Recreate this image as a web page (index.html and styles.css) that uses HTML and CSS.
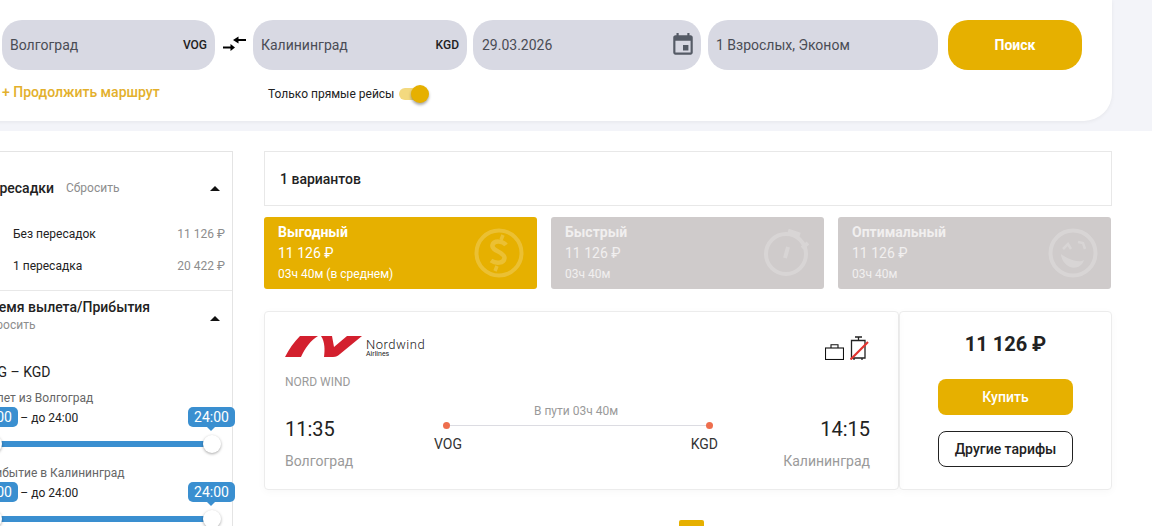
FILE: index.html
```html
<!doctype html>
<html lang="ru">
  <head>
    <meta charset="UTF-8" />
    <meta name="viewport" content="width=device-width, initial-scale=1.0" />
    <title>Поиск рейсов</title>
    <link rel="stylesheet" href="styles.css">
  </head>
  <body>
    <div class="page">
      <div class="top-band">
        <header class="search-panel">
          <div class="search-row">
            <div class="field field-from"><span>Волгоград</span><b class="iata">VOG</b></div>
            <svg class="swap" width="24" height="18" viewBox="0 0 24 18">
              <path d="M24 4H14" fill="none" stroke="#000" stroke-width="2"/>
              <path d="M11 4l5.500-3.500v7z" fill="#000"/>
              <path d="M1 11.500h9" fill="none" stroke="#000" stroke-width="2"/>
              <path d="M13 11.500 8.500 8v7z" fill="#000"/>
            </svg>
            <div class="field field-to"><span>Калининград</span><b class="iata">KGD</b></div>
            <div class="field field-date">
              <span>29.03.2026</span>
              <svg width="26" height="26" viewBox="0 0 24 24"><path fill="#555b66" d="M17 12h-5v5h5v-5zM16 1v2H8V1H6v2H5c-1.110 0-1.990.9-1.990 2L3 19c0 1.100.89 2 2 2h14c1.100 0 2-.9 2-2V5c0-1.100-.9-2-2-2h-1V1h-2zm3 18H5V8h14v11z"/></svg>
            </div>
            <div class="field field-pax"><span>1 Взрослых, Эконом</span></div>
            <button class="search-btn">Поиск</button>
          </div>
          <div class="options-row">
            <a class="continue-link">+ Продолжить маршрут</a>
            <div class="direct-only">
              <span>Только прямые рейсы</span>
              <i class="toggle"><i class="toggle-knob"></i></i>
            </div>
          </div>
        </header>
      </div>

      <div class="content">
        <aside class="filters">
          <section class="filter-group group-stops">
            <div class="filter-head">
              <h4>Пересадки</h4>
              <span class="reset">Сбросить</span>
              <i class="caret"></i>
            </div>
            <div class="stop-row"><span>Без пересадок</span><span class="stop-price">11 126 ₽</span></div>
            <div class="stop-row"><span>1 пересадка</span><span class="stop-price">20 422 ₽</span></div>
          </section>
          <section class="filter-group group-time">
            <div class="filter-head head-time">
              <div>
                <h4>Время вылета/Прибытия</h4>
                <span class="reset">Сбросить</span>
              </div>
              <i class="caret"></i>
            </div>
            <div class="route-name">VOG – KGD</div>
            <div class="slider-label">Вылет из Волгоград</div>
            <div class="slider-range">от 00:00 – до 24:00</div>
            <div class="slider">
              <span class="badge badge-left">00:00</span>
              <span class="badge badge-right">24:00</span>
              <i class="thumb thumb-left"></i>
              <i class="thumb thumb-right"></i>
            </div>
            <div class="slider-label label-second">Прибытие в Калининград</div>
            <div class="slider-range">от 00:00 – до 24:00</div>
            <div class="slider">
              <span class="badge badge-left">00:00</span>
              <span class="badge badge-right">24:00</span>
              <i class="thumb thumb-left"></i>
              <i class="thumb thumb-right"></i>
            </div>
          </section>
        </aside>

        <main class="results">
          <div class="count-box">1 вариантов</div>

          <div class="tabs">
            <div class="tab tab-active">
              <div class="tab-title">Выгодный</div>
              <div class="tab-price">11 126 ₽</div>
              <div class="tab-time">03ч 40м (в среднем)</div>
              <svg class="tab-icon" width="50" height="50" viewBox="0 0 50 50" fill="none" stroke="#fff" stroke-width="4">
                <circle cx="25" cy="25" r="22.500"/>
                <path d="M32 17c-3-4-12-5-13.500 0-1.500 6 12.500 7 12 13-.5 5.500-8.500 6-13.500 2.500" stroke-width="4.500"/>
                <path d="M29 7l-2 5M23 38l-2 5" stroke-width="3.500"/>
              </svg>
            </div>
            <div class="tab">
              <div class="tab-title">Быстрый</div>
              <div class="tab-price">11 126 ₽</div>
              <div class="tab-time">03ч 40м</div>
              <svg class="tab-icon" width="50" height="50" viewBox="0 0 50 50" fill="none" stroke="#fff" stroke-width="4">
                <circle cx="25" cy="26" r="20"/>
                <path d="M27 3l12 4" stroke-width="4.500"/>
                <path d="M41 20l6-5" stroke-width="4"/>
                <path d="M27 19l-3 11" stroke-width="4"/>
              </svg>
            </div>
            <div class="tab">
              <div class="tab-title">Оптимальный</div>
              <div class="tab-price">11 126 ₽</div>
              <div class="tab-time">03ч 40м</div>
              <svg class="tab-icon" width="50" height="50" viewBox="0 0 50 50" fill="none" stroke="#fff" stroke-width="4">
                <circle cx="25" cy="25" r="22.500"/>
                <path d="M15 21l5-5 3 5M30 14l5 1 2 6" stroke-width="2.500"/>
                <path d="M13 26c3 3 17 10 23 6-2 7-9 9-14 7-5-2-9-8-9-13z" fill="#fff" stroke="none"/>
              </svg>
            </div>
          </div>

          <article class="flight">
            <div class="flight-info">
              <div class="flight-head">
                <div class="airline">
                  <div class="airline-logo">
                    <svg width="78" height="22" viewBox="0 0 78 22">
                      <path fill="#d3202e" d="M0 21C4 13 9 6 15 0H33C26 4 20 12 16 21z"/>
                      <path fill="#d3202e" d="M36 0H47L49 11 62 0H77L55 18C53 20 51 21 48 21H39C40 14 40 6 36 0z"/>
                    </svg>
                    <div class="airline-name">Nordwind<small>Airlines</small></div>
                  </div>
                  <div class="airline-title">NORD WIND</div>
                </div>
                <div class="baggage">
                  <svg width="19" height="16" viewBox="0 0 19 16" fill="none" stroke="#111" stroke-width="1.100">
                    <rect x="0.500" y="4" width="18" height="11.500"/>
                    <path d="M6 4V0.800h7V4"/>
                  </svg>
                  <svg width="19" height="24" viewBox="0 0 19 24" fill="none">
                    <path d="M1.500 4.500H15V22H1.500zM5 1h7M8.500 1v3.500M4 22v2M12 22v2" stroke="#222" stroke-width="1.300"/>
                    <path d="M0.500 23.500 18 6" stroke="#e2332e" stroke-width="2.200"/>
                  </svg>
                </div>
              </div>
              <div class="route-row">
                <div class="point">
                  <div class="time">11:35</div>
                  <div class="city">Волгоград</div>
                </div>
                <div class="route">
                  <div class="duration">В пути 03ч 40м</div>
                  <div class="route-line"><i class="dot"></i><i class="dot"></i></div>
                  <div class="route-codes"><span>VOG</span><span>KGD</span></div>
                </div>
                <div class="point point-end">
                  <div class="time">14:15</div>
                  <div class="city">Калининград</div>
                </div>
              </div>
            </div>
            <div class="flight-buy">
              <div class="price">11 126 ₽</div>
              <button class="buy-btn">Купить</button>
              <button class="tariff-btn">Другие тарифы</button>
            </div>
          </article>

          <div class="pager"><span class="pager-item"></span></div>
        </main>
      </div>
    </div>
  </body>
</html>
```

FILE: styles.css
```css
* {
  box-sizing: border-box;
}

html,
body {
  margin: 0;
  height: 526px;
  overflow: hidden;
}

body {
  font-family: Roboto, "Liberation Sans", sans-serif;
  font-size: 14px;
  color: #222;
  background: #fff;
}

.page {
  width: 1152px;
  height: 526px;
  overflow: hidden;
}

/* search panel */
.top-band {
  height: 131px;
  background: #f3f4f9;
}

.search-panel {
  width: 1142px;
  height: 121px;
  margin-left: -30px;
  padding: 20px 0 0 32px;
  background: #fff;
  border-radius: 0 0 28px 0;
  box-shadow: 0 1px 4px rgba(0, 0, 0, 0.06);
}

.search-row {
  display: flex;
  align-items: center;
  height: 50px;
}

.field {
  display: flex;
  align-items: center;
  justify-content: space-between;
  height: 50px;
  padding: 0 8px;
  background: #d8d9e3;
  border-radius: 20px;
  color: #4a4c55;
}

.field-from {
  width: 213px;
}

.field-to {
  width: 214px;
  margin-right: 6px;
}

.field-date {
  width: 228px;
  margin-right: 7px;
  padding: 0 5px 0 9px;
}

.field-pax {
  width: 230px;
  margin-right: 10px;
}

.iata {
  font-size: 12px;
  font-weight: 500;
  color: #222;
}

.swap {
  margin: 0 7px 0 7px;
}

.search-btn {
  width: 134px;
  height: 50px;
  border: none;
  border-radius: 20px;
  background: #e6b000;
  color: #fff;
  font: 700 14px Roboto, sans-serif;
}

.options-row {
  display: flex;
  align-items: center;
  height: 44px;
}

.continue-link {
  width: 266px;
  font-weight: 500;
  color: #e3b02c;
}

.direct-only {
  display: flex;
  align-items: center;
  gap: 5px;
  margin-top: 4px;
  font-size: 12px;
  color: #222;
}

.toggle {
  position: relative;
  display: block;
  width: 24px;
  height: 12px;
  border-radius: 6px;
  background: #f3d97f;
}

.toggle-knob {
  position: absolute;
  top: -3px;
  right: -6px;
  width: 18px;
  height: 18px;
  border-radius: 50%;
  background: #e6b000;
  box-shadow: 0 2px 3px rgba(0, 0, 0, 0.35);
}

/* page body */
.content {
  display: flex;
  align-items: flex-start;
  gap: 31px;
  margin-left: -30px;
  padding-top: 20px;
}

.filters {
  flex: none;
  width: 263px;
  height: 500px;
  border: 1px solid #e4e4e4;
}

.filter-group {
  padding: 0 7px 0 11px;
}

.group-stops {
  height: 139px;
  border-bottom: 1px solid #e8e8e8;
}

.filter-head {
  display: flex;
  align-items: center;
  height: 72px;
}

.filter-head h4 {
  margin: 0;
  font-size: 14px;
  font-weight: 500;
  line-height: 18px;
}

.filter-head .reset {
  margin-left: 12px;
}

.reset {
  font-size: 12px;
  color: #8d8d8d;
}

.caret {
  width: 0;
  height: 0;
  margin-left: auto;
  margin-right: 5px;
  border: 5px solid transparent;
  border-top: none;
  border-bottom: 5px solid #111;
}

.stop-row {
  display: flex;
  justify-content: space-between;
  height: 32px;
  margin-top: -6px;
  margin-bottom: 6px;
  padding: 0 0 0 31px;
  font-size: 12px;
  line-height: 32px;
}

.stop-price {
  color: #8d8d8d;
}

.head-time {
  height: 50px;
  align-items: flex-start;
  padding-top: 7px;
}

.head-time .reset {
  display: block;
  margin: 2px 0 0;
}

.head-time .caret {
  margin-top: 18px;
}

.route-name {
  margin: 22px 0 0 -3px;
  line-height: 18px;
}

.slider-label {
  margin: 9px 0 0 -2px;
  font-size: 12px;
  line-height: 16px;
  color: #666;
}

.label-second {
  margin-top: 18px;
}

.slider-range {
  margin: 4px 0 0 -10px;
  font-size: 12px;
  line-height: 16px;
}

.slider {
  position: relative;
  width: 219px;
  height: 6px;
  margin: 15px 0 0 11px;
  background: #3a8fd0;
}

.badge {
  position: absolute;
  top: -34px;
  width: 47px;
  height: 20px;
  background: #3a8fd0;
  border-radius: 5px;
  color: #fff;
  font-size: 14px;
  line-height: 20px;
  text-align: center;
}

.badge::after {
  content: "";
  position: absolute;
  left: 18px;
  bottom: -4px;
  border: 5px solid transparent;
  border-bottom: none;
  border-top: 5px solid #3a8fd0;
}

.badge-left {
  left: -22px;
}

.badge-right {
  right: -23px;
}

.thumb {
  position: absolute;
  top: -6px;
  width: 18px;
  height: 18px;
  border-radius: 50%;
  background: #fff;
  box-shadow: 0 1px 3px rgba(0, 0, 0, 0.35);
}

.thumb-left {
  left: -9px;
}

.thumb-right {
  right: -9px;
}

/* results */
.results {
  flex: none;
  width: 848px;
}

.count-box {
  height: 55px;
  padding-left: 15px;
  border: 1px solid #e8e8e8;
  font-weight: 500;
  line-height: 55px;
  color: #222;
}

.tabs {
  display: flex;
  gap: 14px;
  margin-top: 11px;
}

.tab {
  position: relative;
  width: 273px;
  height: 72px;
  padding: 7px 14px;
  border-radius: 3px;
  background: #cfcbcb;
  color: #f1efef;
}

.tab-active {
  background: #e6b000;
  color: #fff;
}

.tab-title {
  font-weight: 700;
  line-height: 17px;
}

.tab-price {
  margin-top: 4px;
  line-height: 17px;
}

.tab-time {
  margin-top: 4px;
  font-size: 12px;
  line-height: 16px;
}

.tab-icon {
  position: absolute;
  top: 11px;
  right: 13px;
  opacity: 0.2;
}

.flight {
  display: flex;
  height: 179px;
  margin-top: 22px;
}

.flight-info,
.flight-buy {
  border: 1px solid #ececec;
  border-radius: 4px;
  box-shadow: 0 2px 8px rgba(0, 0, 0, 0.03);
}

.flight-info {
  width: 635px;
  padding: 24px 28px 0 20px;
}

.flight-head {
  display: flex;
  justify-content: space-between;
}

.airline-logo {
  display: flex;
  align-items: flex-start;
  gap: 3px;
}

.airline-name {
  margin-top: 2px;
  font-size: 13px;
  font-weight: 300;
  line-height: 13px;
  letter-spacing: 0.5px;
  color: #222;
}

.airline-name small {
  display: block;
  font-size: 7px;
  font-weight: 400;
  line-height: 7px;
  letter-spacing: 0;
}

.airline-title {
  margin-top: 16px;
  font-size: 12px;
  line-height: 16px;
  color: #9a9a9a;
}

.baggage {
  display: flex;
  align-items: flex-end;
  gap: 6px;
  height: 24px;
  margin-right: 1px;
}

.route-row {
  display: flex;
  justify-content: space-between;
  margin-top: 13px;
}

.point {
  width: 110px;
  padding-top: 14px;
}

.point-end {
  text-align: right;
}

.time {
  font-size: 20px;
  line-height: 24px;
}

.city {
  margin-top: 11px;
  line-height: 18px;
  color: #9a9a9a;
}

.route {
  flex: none;
  width: 284px;
  margin-left: 39px;
  margin-right: 42px;
}

.duration {
  font-size: 12px;
  line-height: 16px;
  text-align: center;
  color: #9a9a9a;
}

.route-line {
  display: flex;
  justify-content: space-between;
  align-items: center;
  height: 8px;
  margin: 2px 5px 0 9px;
  background: linear-gradient(#dcdce2, #dcdce2) center / 100% 1px no-repeat;
}

.dot {
  width: 7px;
  height: 7px;
  border-radius: 50%;
  background: #ee6e4d;
}

.route-codes {
  display: flex;
  justify-content: space-between;
  margin-top: 7px;
  line-height: 16px;
  color: #333;
}

.flight-buy {
  display: flex;
  flex-direction: column;
  align-items: center;
  width: 213px;
  padding-top: 20px;
}

.price {
  font-size: 20px;
  font-weight: 700;
  line-height: 24px;
}

.buy-btn,
.tariff-btn {
  width: 135px;
  height: 36px;
  border-radius: 8px;
  font: 500 14px Roboto, sans-serif;
}

.buy-btn {
  margin-top: 23px;
  border: none;
  background: #e6b000;
  color: #fff;
}

.tariff-btn {
  margin-top: 16px;
  border: 1px solid #222;
  background: #fff;
  color: #222;
}

.pager {
  display: flex;
  justify-content: center;
  margin-top: 30px;
  padding-left: 7px;
}

.pager-item {
  width: 25px;
  height: 25px;
  border-radius: 2px;
  background: #e6b000;
}
```
